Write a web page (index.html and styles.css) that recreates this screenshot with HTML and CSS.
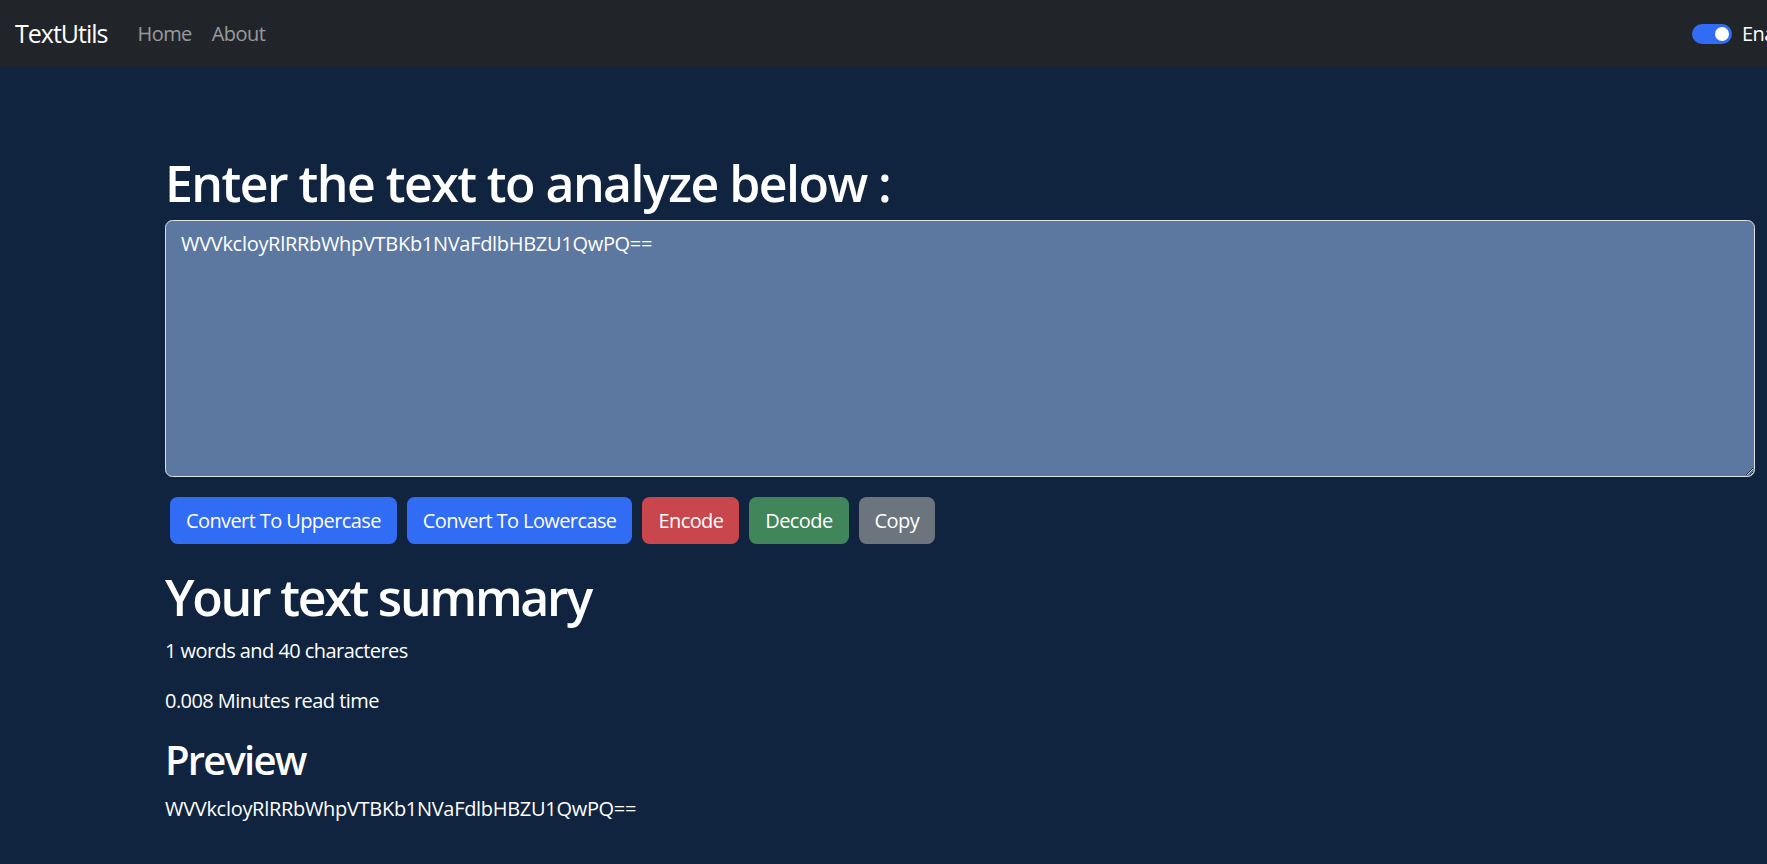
FILE: index.html
```html
<!DOCTYPE html>
<html lang="en">
<head>
<meta charset="utf-8">
<title>TextUtils</title>
<link rel="stylesheet" href="styles.css">
</head>
<body>
<nav class="navbar">
  <a class="brand" href="#">TextUtils</a>
  <ul class="nav-links">
    <li><a href="#">Home</a></li>
    <li><a href="#">About</a></li>
  </ul>
  <div class="nav-right">
    <span class="switch"><span class="knob"></span></span>
    <label class="switch-label">Enable Dark Mode</label>
  </div>
</nav>
<main class="container">
  <h1 class="title title-main">Enter the text to analyze below :</h1>
  <textarea class="textbox" rows="8">WVVkcloyRlRRbWhpVTBKb1NVaFdlbHBZU1QwPQ==</textarea>
  <div class="buttons">
    <button class="btn btn-primary">Convert To Uppercase</button>
    <button class="btn btn-primary">Convert To Lowercase</button>
    <button class="btn btn-danger">Encode</button>
    <button class="btn btn-success">Decode</button>
    <button class="btn btn-secondary">Copy</button>
  </div>
  <section class="summary">
    <h1 class="title">Your text summary</h1>
    <p>1 words and 40 characteres</p>
    <p>0.008 Minutes read time</p>
    <h2 class="subtitle">Preview</h2>
    <p class="preview">WVVkcloyRlRRbWhpVTBKb1NVaFdlbHBZU1QwPQ==</p>
  </section>
</main>
</body>
</html>
```
FILE: styles.css
```css
html, body {
  overflow: hidden;
}
body {
  margin: 0;
  background: #10243f;
  color: #ffffff;
  font-family: "Open Sans", "Noto Sans", sans-serif;
  font-size: 20px;
  line-height: 1.5;
  letter-spacing: -0.028em;
}
.navbar {
  height: 67px;
  background: #212529;
  display: flex;
  align-items: center;
  padding: 0 0 0 15px;
  box-sizing: border-box;
}
.brand {
  color: #ffffff;
  text-decoration: none;
  font-size: 25px;
  letter-spacing: -0.04em;
  margin-right: 20px;
}
.nav-links {
  list-style: none;
  display: flex;
  margin: 0;
  padding: 0;
}
.nav-links a {
  display: block;
  padding: 10px;
  color: rgba(255,255,255,.55);
  text-decoration: none;
}
.nav-right {
  margin-left: auto;
  width: 75px;
  flex: none;
  display: flex;
  align-items: center;
  white-space: nowrap;
}
.switch {
  width: 40px;
  height: 20px;
  border-radius: 10px;
  background: #316cf4;
  display: flex;
  align-items: center;
  justify-content: flex-end;
  padding-right: 3px;
  box-sizing: border-box;
  flex: none;
}
.knob {
  width: 14px;
  height: 14px;
  border-radius: 50%;
  background: #ffffff;
}
.switch-label {
  margin-left: 10px;
}
.container {
  padding: 83px 12px 0 165px;
}
.title {
  font-size: 50px;
  font-weight: 600;
  line-height: 1.2;
  letter-spacing: -0.045em;
  margin: 0 0 10px;
  padding-top: 3px;
  height: 57px;
}
.title-main {
  letter-spacing: -0.031em;
}
.subtitle {
  font-size: 40px;
  font-weight: 600;
  line-height: 1.2;
  letter-spacing: -0.045em;
  margin: 0 0 10px;
  padding-top: 2px;
  height: 46px;
}
.textbox {
  display: block;
  width: 100%;
  box-sizing: border-box;
  height: 257px;
  margin: 0 0 20px;
  padding: 7.5px 15px;
  background: #5c78a0;
  color: #ffffff;
  border: 1px solid #dee2e6;
  border-radius: 7.5px;
  font: inherit;
  letter-spacing: -0.015em;
  line-height: 1.5;
}
.buttons {
  display: flex;
}
.btn {
  font: inherit;
  letter-spacing: -0.03em;
  color: #ffffff;
  border: 1px solid transparent;
  border-radius: 7.5px;
  padding: 7.5px 15px;
  margin: 0 5px;
  line-height: 1.5;
}
.btn-primary { background: #316cf4; }
.btn-danger { background: #c9464d; }
.btn-success { background: #41855a; }
.btn-secondary { background: #6c757d; }
.summary {
  margin-top: 20px;
}
.summary p {
  margin: 0 0 20px;
  padding-top: 2px;
  height: 28px;
}
.summary .preview {
  letter-spacing: -0.015em;
  margin-bottom: 0;
}
```
